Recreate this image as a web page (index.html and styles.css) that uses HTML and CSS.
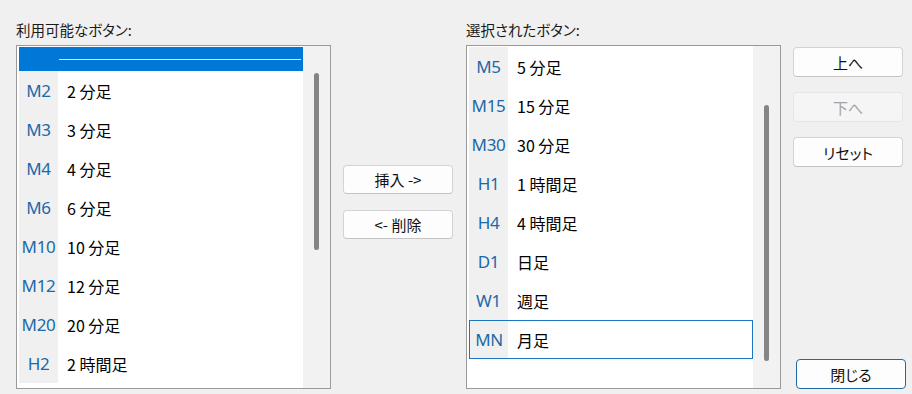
FILE: index.html
```html
<!DOCTYPE html>
<html lang="ja">
<head>
<meta charset="utf-8">
<title>ボタン設定</title>
<link rel="stylesheet" href="styles.css">
</head>
<body>
<div class="dialog">
  <section class="panel">
    <div class="label">利用可能なボタン:</div>
    <div class="list">
      <div class="items">
        <div class="row sep-row"><div class="icon"></div><div class="sep-line"></div></div>
        <div class="row"><div class="icon">M2</div><div class="text">2 分足</div></div>
        <div class="row"><div class="icon">M3</div><div class="text">3 分足</div></div>
        <div class="row"><div class="icon">M4</div><div class="text">4 分足</div></div>
        <div class="row"><div class="icon">M6</div><div class="text">6 分足</div></div>
        <div class="row"><div class="icon">M10</div><div class="text">10 分足</div></div>
        <div class="row"><div class="icon">M12</div><div class="text">12 分足</div></div>
        <div class="row"><div class="icon">M20</div><div class="text">20 分足</div></div>
        <div class="row"><div class="icon">H2</div><div class="text">2 時間足</div></div>
      </div>
      <div class="track track-left"><div class="thumb thumb-left"></div></div>
    </div>
  </section>

  <div class="middle">
    <button class="btn">挿入 -&gt;</button>
    <button class="btn">&lt;- 削除</button>
  </div>

  <section class="panel">
    <div class="label">選択されたボタン:</div>
    <div class="list">
      <div class="items">
        <div class="row"><div class="icon">M5</div><div class="text">5 分足</div></div>
        <div class="row"><div class="icon">M15</div><div class="text">15 分足</div></div>
        <div class="row"><div class="icon">M30</div><div class="text">30 分足</div></div>
        <div class="row"><div class="icon">H1</div><div class="text">1 時間足</div></div>
        <div class="row"><div class="icon">H4</div><div class="text">4 時間足</div></div>
        <div class="row"><div class="icon">D1</div><div class="text">日足</div></div>
        <div class="row"><div class="icon">W1</div><div class="text">週足</div></div>
        <div class="row focused"><div class="icon">MN</div><div class="text">月足</div></div>
      </div>
      <div class="track track-right"><div class="thumb thumb-right"></div></div>
    </div>
  </section>

  <div class="side">
    <button class="btn">上へ</button>
    <button class="btn" disabled>下へ</button>
    <button class="btn">リセット</button>
    <button class="btn btn-default">閉じる</button>
  </div>
</div>
</body>
</html>
```

FILE: styles.css
```css
html, body {
  margin: 0;
  padding: 0;
  background: #f0f0f0;
}

body {
  width: 912px;
  height: 394px;
  overflow: hidden;
  font-family: "Noto Sans CJK JP", "Noto Sans", sans-serif;
  font-feature-settings: "palt";
  color: #000;
}

.dialog {
  display: flex;
  padding: 20px 0 0 16px;
  height: 369px;
}

.panel {
  width: 315px;
  display: flex;
  flex-direction: column;
}

.label {
  height: 20px;
  line-height: 20px;
  font-size: 14.5px;
  margin-bottom: 5px;
  color: #1a1a1a;
}

.list {
  height: 344px;
  box-sizing: border-box;
  border: 1px solid #9a9a9a;
  background: #ffffff;
  display: flex;
  padding-left: 2px;
  overflow: hidden;
}

.items {
  width: 284px;
  padding-top: 1px;
  display: flex;
  flex-direction: column;
}

.row {
  height: 39px;
  flex: none;
  display: flex;
  align-items: center;
  box-sizing: border-box;
}

.icon {
  width: 39px;
  height: 100%;
  flex: none;
  background: #f0f0f0;
  display: flex;
  align-items: center;
  justify-content: center;
  font-family: "Noto Sans", "Open Sans", sans-serif;
  font-size: 17px;
  color: #1c69a8;
  letter-spacing: -0.3px;
}

.text {
  padding-left: 9px;
  font-size: 16px;
  color: #000;
}

.sep-row {
  height: 24px;
  background: #0078d7;
}

.sep-row .icon {
  background: #0078d7;
}

.sep-line {
  height: 1px;
  flex: 1;
  margin-left: 1px;
  margin-right: 2px;
  background: #dfe6ee;
}

.focused {
  border: 1px solid #1d75c0;
}

.focused .icon {
  width: 38px;
}

.track {
  flex: 1;
  background: #f2f2f2;
  display: flex;
  flex-direction: column;
}

.thumb {
  width: 5px;
  margin-left: 11px;
  border-radius: 3px;
  background: #858585;
}

.track-left {
  padding-top: 27px;
}

.thumb-left {
  height: 177px;
}

.track-right {
  padding-top: 59px;
}

.thumb-right {
  height: 256px;
}

.middle {
  width: 135px;
  display: flex;
  flex-direction: column;
  align-items: flex-start;
  padding-top: 145px;
  gap: 16px;
}

.middle .btn {
  margin-left: 12px;
  height: 29px;
}

.btn {
  width: 110px;
  height: 30px;
  box-sizing: border-box;
  background: #fdfdfd;
  border: 1px solid #d3d3d3;
  border-bottom-color: #c4c4c4;
  border-radius: 4px;
  font-family: "Noto Sans CJK JP", "Noto Sans", sans-serif;
  font-feature-settings: "palt";
  font-size: 15px;
  color: #111;
  padding: 0;
  line-height: 1;
}

.btn:disabled {
  background: #f5f5f5;
  border-color: #e6e6e6;
  color: #a3a3a3;
}

.side {
  width: 112px;
  margin-left: 12px;
  padding-top: 27px;
  display: flex;
  flex-direction: column;
  gap: 15px;
  box-sizing: border-box;
  height: 369px;
}

.btn-default {
  margin-top: auto;
  margin-left: 3px;
  border: 1px solid #1f6aa6;
}
```
